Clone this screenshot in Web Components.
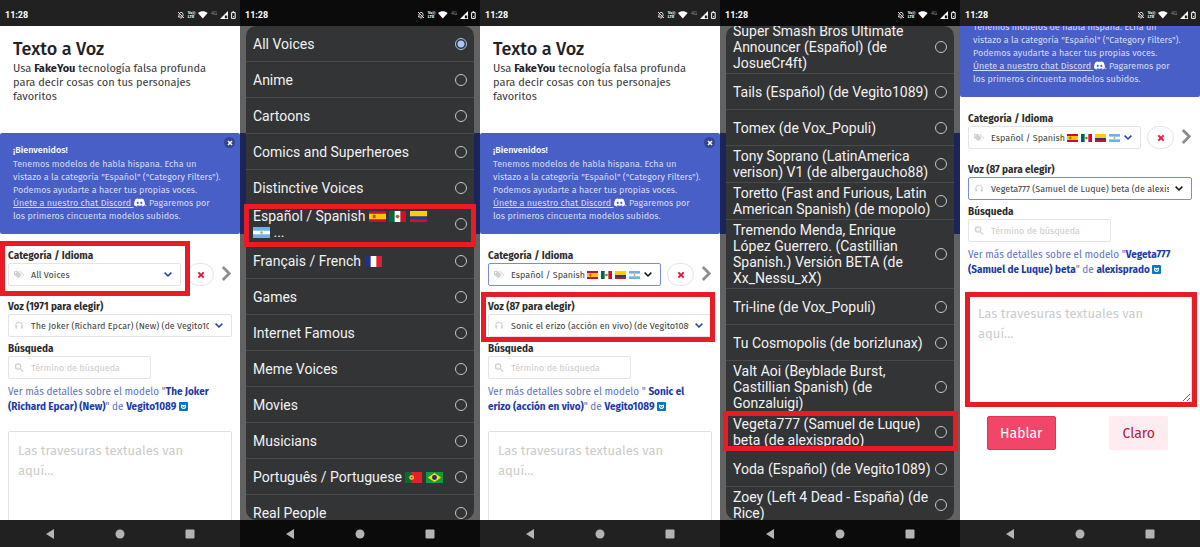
<!DOCTYPE html>
<html lang="es">
<head>
  <meta charset="UTF-8">
  <meta name="viewport" content="width=device-width, initial-scale=1">
  <title>Texto a Voz</title>
  <style>
    body {
      margin: 0;
      font-family: 'Fira Sans', 'Noto Sans', sans-serif;
      background: #fff;
    }
    main {
      display: grid;
      grid-template-columns: repeat(5, minmax(0, 1fr));
      height: 100vh;
      overflow: hidden;
    }
  </style>
</head>
<body>
  <main>
    <phone-frame>
      <page-intro></page-intro>
      <welcome-notice></welcome-notice>
      <voice-form count="1971" category="All Voices" voice="The Joker (Richard Epcar) (New) (de Vegito1089)">
        Ver más detalles sobre el modelo "<b>The Joker (Richard Epcar) (New)</b>" de <b>Vegito1089</b>
      </voice-form>
      <highlight-box slot="overlay" style="top: 241px; left: 0; right: 50px; height: 55px"></highlight-box>
    </phone-frame>

    <phone-frame dimmed>
      <option-sheet>
        <option-row checked>All Voices</option-row>
        <option-row>Anime</option-row>
        <option-row>Cartoons</option-row>
        <option-row>Comics and Superheroes</option-row>
        <option-row>Distinctive Voices</option-row>
        <option-row>Español / Spanish <flag-icon country="es"></flag-icon> <flag-icon country="mx"></flag-icon> <flag-icon country="co"></flag-icon> <span style="white-space: nowrap"><flag-icon country="ar"></flag-icon> ...</span></option-row>
        <option-row>Français / French <flag-icon country="fr"></flag-icon></option-row>
        <option-row>Games</option-row>
        <option-row>Internet Famous</option-row>
        <option-row>Meme Voices</option-row>
        <option-row>Movies</option-row>
        <option-row>Musicians</option-row>
        <option-row>Português / Portuguese <flag-icon country="pt"></flag-icon> <flag-icon country="br"></flag-icon></option-row>
        <option-row>Real People</option-row>
      </option-sheet>
      <highlight-box slot="overlay" style="top: 204px; left: 4px; right: 4px; height: 43px"></highlight-box>
    </phone-frame>

    <phone-frame>
      <page-intro></page-intro>
      <welcome-notice></welcome-notice>
      <voice-form count="87" category="Español / Spanish" flags="es mx co ar" focused="category" voice="Sonic el erizo (acción en vivo) (de Vegito1089)">
        Ver más detalles sobre el modelo " <b>Sonic el erizo (acción en vivo)</b>" de <b>Vegito1089</b>
      </voice-form>
      <highlight-box slot="overlay" style="top: 292px; left: 1px; right: 5px; height: 50px"></highlight-box>
    </phone-frame>

    <phone-frame dimmed>
      <option-sheet scroll="5">
        <option-row>Super Smash Bros Ultimate Announcer (Español) (de JosueCr4ft)</option-row>
        <option-row>Tails (Español) (de Vegito1089)</option-row>
        <option-row>Tomex (de Vox_Populi)</option-row>
        <option-row>Tony Soprano (LatinAmerica verison) V1 (de albergaucho88)</option-row>
        <option-row>Toretto (Fast and Furious, Latin American Spanish) (de mopolo)</option-row>
        <option-row>Tremendo Menda, Enrique López Guerrero. (Castillian Spanish.) Versión BETA (de Xx_Nessu_xX)</option-row>
        <option-row>Tri-line (de Vox_Populi)</option-row>
        <option-row>Tu Cosmopolis (de borizlunax)</option-row>
        <option-row>Valt Aoi (Beyblade Burst, Castillian Spanish) (de Gonzaluigi)</option-row>
        <option-row>Vegeta777 (Samuel de Luque) beta (de alexisprado)</option-row>
        <option-row>Yoda (Español) (de Vegito1089)</option-row>
        <option-row>Zoey (Left 4 Dead - España) (de Rice)</option-row>
      </option-sheet>
      <highlight-box slot="overlay" style="top: 411px; left: 3px; right: 2px; height: 40px"></highlight-box>
    </phone-frame>

    <phone-frame scroll="137">
      <page-intro></page-intro>
      <welcome-notice></welcome-notice>
      <voice-form count="87" category="Español / Spanish" flags="es mx co ar" focused="voice" voice="Vegeta777 (Samuel de Luque) beta (de alexisprado)">
        Ver más detalles sobre el modelo "<b>Vegeta777 (Samuel de Luque) beta</b>" de <b>alexisprado</b>
      </voice-form>
      <highlight-box slot="overlay" style="top: 292px; left: 5px; right: 3px; height: 115px"></highlight-box>
    </phone-frame>
  </main>

  <script>
    const ICONS = {
      tags: '<svg viewBox="0 0 640 512" fill="currentColor"><path fill-rule="evenodd" d="M0 252V80c0-26 22-48 48-48h172c13 0 25 5 34 14l212 212c19 19 19 49 0 68L326 466c-19 19-49 19-68 0L14 286c-9-9-14-21-14-34zm112-156a48 48 0 100 96 48 48 0 000-96z"/><path d="M625 258L413 46c-9-9-21-14-34-14h-46l226 226c30 30 30 74 2 104L420 500c19 8 44-16 50-24l155-150c19-19 19-49 0-68z"/></svg>',
      headset: '<svg viewBox="0 0 24 24" fill="currentColor"><path d="M12 2C6.500 2 2 6.500 2 12v4a3 3 0 003 4h2v-8H4.500C4.500 7.500 8 4.500 12 4.500s7.500 3 7.500 7.500H17v8h2a3 3 0 003-4v-4c0-5.500-4.500-10-10-10z"/></svg>',
      search: '<svg viewBox="0 0 24 24" fill="none" stroke="currentColor" stroke-width="3.500" stroke-linecap="round"><circle cx="9.500" cy="9.500" r="7"/><path d="M15 15l7 7"/></svg>',
      chevronDown: '<svg viewBox="0 0 12 12" fill="none" stroke="currentColor" stroke-width="2"><path d="M1.500 3.500L6 8l4.500-4.500"/></svg>',
      chevronRight: '<svg viewBox="0 0 12 18" fill="none" stroke="currentColor" stroke-width="3"><path d="M2 2l7 7-7 7"/></svg>',
      close: '<svg viewBox="0 0 12 12" fill="none" stroke="currentColor" stroke-width="3"><path d="M2 2l8 8M10 2l-8 8"/></svg>',
      discord: '<svg viewBox="0 2 24 20" fill="currentColor"><path d="M20.317 4.3698a19.7913 19.7913 0 00-4.8851-1.5152.0741.0741 0 00-.0785.0371c-.211.3753-.4447.8648-.6083 1.2495-1.8447-.2762-3.68-.2762-5.4868 0-.1636-.3933-.4058-.8742-.6177-1.2495a.077.077 0 00-.0785-.037 19.7363 19.7363 0 00-4.8852 1.515.0699.0699 0 00-.0321.0277C.5334 9.0458-.319 13.5799.0992 18.0578a.0824.0824 0 00.0312.0561c2.0528 1.5076 4.0413 2.4228 5.9929 3.0294a.0777.0777 0 00.0842-.0276c.4616-.6304.8731-1.2952 1.226-1.9942a.076.076 0 00-.0416-.1057c-.6528-.2476-1.2743-.5495-1.8722-.8923a.077.077 0 01-.0076-.1277c.1258-.0943.2517-.1923.3718-.2914a.0743.0743 0 01.0776-.0105c3.9278 1.7933 8.18 1.7933 12.0614 0a.0739.0739 0 01.0785.0095c.1202.099.246.1981.3728.2924a.077.077 0 01-.0066.1276 12.2986 12.2986 0 01-1.873.8914.0766.0766 0 00-.0407.1067c.3604.698.7719 1.3628 1.225 1.9932a.076.076 0 00.0842.0286c1.961-.6067 3.9495-1.5219 6.0023-3.0294a.077.077 0 00.0313-.0552c.5004-5.177-.8382-9.6739-3.5485-13.6604a.061.061 0 00-.0312-.0286zM8.02 15.3312c-1.1825 0-2.1569-1.0857-2.1569-2.419 0-1.3332.9555-2.4189 2.157-2.4189 1.2108 0 2.1757 1.0952 2.1568 2.419 0 1.3332-.9555 2.4189-2.1569 2.4189zm7.9748 0c-1.1825 0-2.1569-1.0857-2.1569-2.419 0-1.3332.9554-2.4189 2.1569-2.4189 1.2108 0 2.1757 1.0952 2.1568 2.419 0 1.3332-.946 2.4189-2.1568 2.4189z"/></svg>',
      badge: '<svg viewBox="0 0 18 18"><rect width="18" height="18" rx="2" fill="#0f74b8"/><path d="M4 5l3 1h4l3-1v6l-3 3H7l-3-3z" fill="#e6fbff"/><path d="M6 8l3 2 3-2v2l-3 2-3-2z" fill="#0f74b8"/></svg>',
      bellOff: '<svg viewBox="0 0 24 24" fill="none" stroke="currentColor" stroke-width="2.500"><path d="M3 3l18 18M8 6c5-4 10-1 10 4v5M6 9v6l-2 3h13M10 21h4"/></svg>',
      wifi: '<svg viewBox="0 0 24 20" fill="currentColor"><path d="M0 5C7-1 17-1 24 5L12 19z"/></svg>',
      signal: '<svg viewBox="0 0 20 20"><path fill="currentColor" fill-rule="evenodd" d="M20 0v20H0zM12 11v7h6v-7z"/></svg>',
      battery: '<svg viewBox="0 0 12 20" fill="none" stroke="currentColor" stroke-width="2.500"><path d="M1.500 4h9v14.500h-9z"/><path d="M4 2h4"/><path d="M5 14h2"/></svg>',
      back: '<svg viewBox="0 0 10 10" fill="currentColor"><path d="M9 0v10L1 5z"/></svg>',
      home: '<svg viewBox="0 0 10 10" fill="currentColor"><circle cx="5" cy="5" r="4.500"/></svg>',
      recent: '<svg viewBox="0 0 10 10" fill="currentColor"><rect x="0.500" y="0.500" width="9" height="9" rx="1"/></svg>'
    };

    const FLAGS = {
      es: '<path fill="#c8102e" d="M0 0h18v12H0z"/><path fill="#ffc400" d="M0 3h18v6H0z"/><path fill="#b3541e" d="M4 4h3v4H4z"/>',
      mx: '<path fill="#fff" d="M0 0h18v12H0z"/><path fill="#006847" d="M0 0h6v12H0z"/><path fill="#ce1126" d="M12 0h6v12h-6z"/><circle cx="9" cy="6" r="2" fill="#8c6b3f"/>',
      co: '<path fill="#ffcd00" d="M0 0h18v6H0z"/><path fill="#1e3a97" d="M0 6h18v3H0z"/><path fill="#d0102c" d="M0 9h18v3H0z"/>',
      ar: '<path fill="#6cb4e8" d="M0 0h18v12H0z"/><path fill="#fff" d="M0 4h18v4H0z"/><circle cx="9" cy="6" r="1.500" fill="#e0a030"/>',
      fr: '<path fill="#fff" d="M0 0h18v12H0z"/><path fill="#1e2f96" d="M0 0h6v12H0z"/><path fill="#e1202e" d="M12 0h6v12h-6z"/>',
      pt: '<path fill="#e1202e" d="M0 0h18v12H0z"/><path fill="#0a6b2d" d="M0 0h7v12H0z"/><circle cx="7" cy="6" r="2.500" fill="#ffd83d"/><circle cx="7" cy="6" r="1.200" fill="#e1202e"/>',
      br: '<path fill="#0f9b3f" d="M0 0h18v12H0z"/><path fill="#ffdf00" d="M9 1l7 5-7 5-7-5z"/><circle cx="9" cy="6" r="2.600" fill="#1d2f85"/>'
    };

    class FlagIcon extends HTMLElement {
      constructor() {
        super();
        this.attachShadow({ mode: 'open' });
      }

      connectedCallback() {
        this.shadowRoot.innerHTML = `
          <style>
            :host {
              display: inline-block;
              width: var(--flag-width, 17px);
              height: var(--flag-height, 11px);
              vertical-align: -1px;
            }
            svg { display: block; width: 100%; height: 100%; }
          </style>
          <svg viewBox="0 0 18 12" preserveAspectRatio="none" aria-hidden="true">${FLAGS[this.getAttribute('country')]}</svg>
        `;
      }
    }
    customElements.define('flag-icon', FlagIcon);

    class HighlightBox extends HTMLElement {
      constructor() {
        super();
        this.attachShadow({ mode: 'open' });
        this.shadowRoot.innerHTML = `
          <style>
            :host {
              display: block;
              position: absolute;
              box-sizing: border-box;
              border: 5px solid #e81c24;
              pointer-events: none;
            }
          </style>
        `;
      }
    }
    customElements.define('highlight-box', HighlightBox);

    class StatusBar extends HTMLElement {
      constructor() {
        super();
        this.attachShadow({ mode: 'open' });
      }

      connectedCallback() {
        this.shadowRoot.innerHTML = `
          <style>
            :host {
              display: flex;
              align-items: center;
              justify-content: space-between;
              height: 26px;
              padding: 4px 4px 0 5px;
              box-sizing: border-box;
              background: var(--bar-color);
              color: #fff;
              font-family: Roboto, sans-serif;
            }
            time { font-size: 9px; font-weight: 700; }
            .icons { display: flex; align-items: center; gap: 3px; }
            svg { display: block; height: 8px; }
            .volte, .net { font-size: 4px; line-height: 4px; font-weight: 700; }
            .net { color: #888; font-size: 5px; font-weight: 400; margin-bottom: 4px; }
          </style>
          <time>11:28</time>
          <div class="icons">
            ${ICONS.bellOff}
            <span class="volte">Vo))<br>LTE</span>
            ${ICONS.wifi}
            <span class="net">4G</span>
            ${ICONS.signal}
            ${ICONS.battery}
          </div>
        `;
      }
    }
    customElements.define('status-bar', StatusBar);

    class NavBar extends HTMLElement {
      constructor() {
        super();
        this.attachShadow({ mode: 'open' });
      }

      connectedCallback() {
        this.shadowRoot.innerHTML = `
          <style>
            :host {
              display: grid;
              grid-template-columns: repeat(3, 1fr);
              height: 27px;
              padding: 0 15px;
              box-sizing: border-box;
              background: var(--bar-color);
            }
            button {
              display: flex;
              align-items: center;
              justify-content: center;
              padding: 0;
              border: none;
              background: none;
              color: #b4b4b4;
            }
            svg { width: 10px; height: 10px; }
          </style>
          <button aria-label="Atrás">${ICONS.back}</button>
          <button aria-label="Inicio">${ICONS.home}</button>
          <button aria-label="Recientes">${ICONS.recent}</button>
        `;
      }
    }
    customElements.define('nav-bar', NavBar);

    class PageIntro extends HTMLElement {
      constructor() {
        super();
        this.attachShadow({ mode: 'open' });
      }

      connectedCallback() {
        this.shadowRoot.innerHTML = `
          <style>
            :host {
              display: block;
              padding: 13px 12px 29px 13px;
              color: #363636;
            }
            h1 {
              margin: 0 0 3px;
              font-size: 18px;
              line-height: 20px;
              font-weight: 500;
              color: #222;
            }
            p {
              margin: 0;
              font-size: 11px;
              line-height: 14px;
            }
            b { color: #222; }
          </style>
          <h1>Texto a Voz</h1>
          <p>Usa <b>FakeYou</b> tecnología falsa profunda para decir cosas con tus personajes favoritos</p>
        `;
      }
    }
    customElements.define('page-intro', PageIntro);

    class WelcomeNotice extends HTMLElement {
      constructor() {
        super();
        this.attachShadow({ mode: 'open' });
      }

      connectedCallback() {
        this.shadowRoot.innerHTML = `
          <style>
            :host {
              display: block;
              position: relative;
              padding: 11px 13px;
              border-radius: 2px;
              background: #485fc7;
              color: #d5dcf6;
              font-size: 9px;
              line-height: 13px;
            }
            strong { display: block; margin-bottom: 1px; font-weight: 500; color: #fff; }
            p { margin: 0; }
            a { color: inherit; }
            .discord svg {
              width: 11px;
              height: 9px;
              vertical-align: -1px;
              color: #fff;
            }
            button {
              position: absolute;
              top: 4px;
              right: 5px;
              display: flex;
              align-items: center;
              justify-content: center;
              width: 11px;
              height: 11px;
              padding: 0;
              border: none;
              border-radius: 50%;
              background: #33448f;
              color: #fff;
            }
            button svg { width: 6px; height: 6px; }
          </style>
          <button aria-label="Cerrar">${ICONS.close}</button>
          <strong>¡Bienvenidos!</strong>
          <p>
            Tenemos modelos de habla hispana. Echa un vistazo a la categoría "Español" ("Category Filters").<br>
            Podemos ayudarte a hacer tus propias voces.<br>
            <a class="discord" href="#discord">Únete a nuestro chat Discord ${ICONS.discord}</a>. Pagaremos por<br>
            los primeros cincuenta modelos subidos.
          </p>
        `;
      }
    }
    customElements.define('welcome-notice', WelcomeNotice);

    class VoiceForm extends HTMLElement {
      constructor() {
        super();
        this.attachShadow({ mode: 'open' });
      }

      connectedCallback() {
        const focused = this.getAttribute('focused');
        const flags = (this.getAttribute('flags') || '').split(' ').filter(Boolean)
          .map((c) => `<flag-icon country="${c}"></flag-icon>`).join('');

        this.shadowRoot.innerHTML = `
          <style>
            :host {
              display: block;
              padding: 15px 8px 70px;
              color: #363636;
            }
            label {
              display: block;
              font-size: 10px;
              line-height: 14px;
              font-weight: 700;
              color: #2b2b2b;
            }
            .row { display: flex; align-items: flex-end; }
            .category { flex: 1; }
            .voice { margin-top: 14px; }
            .search { margin-top: 5px; width: 64%; }
            .control { position: relative; }
            .control > svg {
              position: absolute;
              top: 7px;
              left: 6px;
              width: 10px;
              height: 9px;
              color: #d0d0d0;
            }
            .control > svg.arrow {
              left: auto;
              right: 8px;
              color: #2440b0;
            }
            .focused > svg.arrow { color: #111; }
            select, input {
              display: block;
              width: 100%;
              height: 23px;
              box-sizing: border-box;
              padding: 0 22px;
              border: 1px solid #e4e4e4;
              border-radius: 2px;
              background: #fff;
              color: #404040;
              font-family: inherit;
              font-size: 9px;
              appearance: none;
            }
            .focused select { border-color: #7a8bdc; }
            ::placeholder { color: #ccc; opacity: 1; }
            .flags {
              position: absolute;
              top: 8px;
              left: 99px;
              display: flex;
              gap: 3px;
              --flag-width: 11px;
              --flag-height: 8px;
              pointer-events: none;
            }
            .clear {
              display: flex;
              align-items: center;
              justify-content: center;
              width: 27px;
              height: 23px;
              margin-left: 6px;
              padding: 0;
              border: 1px solid #e4e4e4;
              border-radius: 12px;
              background: #fff;
              color: #e8173f;
            }
            .clear svg { width: 8px; height: 8px; }
            .next {
              margin: 0 0 4px 7px;
              padding: 0;
              border: none;
              background: none;
              color: #8c8c8c;
            }
            .next svg { display: block; width: 11px; height: 17px; }
            .details {
              display: block;
              margin: 6px 0 16px;
              padding-right: 8px;
              font-size: 10px;
              line-height: 15px;
              color: #5b70c6;
              text-decoration: none;
            }
            ::slotted(b) { color: #2038a8; }
            .details svg { width: 9px; height: 9px; vertical-align: -1px; }
            textarea {
              display: block;
              width: 100%;
              height: 109px;
              box-sizing: border-box;
              padding: 9px;
              border: 1px solid #dfdfdf;
              border-radius: 2px;
              font-family: inherit;
              font-size: 13px;
              line-height: 20px;
            }
            .actions {
              display: flex;
              justify-content: space-between;
              margin: 13px 24px 0 19px;
            }
            .actions button {
              height: 34px;
              padding: 0 12px;
              border: 1px solid #feecf0;
              border-radius: 2px;
              background: #feecf0;
              color: #b8163e;
              font-family: inherit;
              font-size: 14px;
            }
            .actions .speak { background: #f14668; color: #fff; border-color: #dd3659; }
          </style>
          <div class="row">
            <div class="category">
              <label for="category">Categoría / Idioma</label>
              <div class="control ${focused === 'category' ? 'focused' : ''}">
                <select id="category"><option>${this.getAttribute('category')}</option></select>
                ${ICONS.tags}
                <span class="flags">${flags}</span>
                ${ICONS.chevronDown.replace('<svg', '<svg class="arrow"')}
              </div>
            </div>
            <button class="clear" aria-label="Quitar filtro">${ICONS.close}</button>
            <button class="next" aria-label="Siguiente">${ICONS.chevronRight}</button>
          </div>
          <div class="voice">
            <label for="voice">Voz (${this.getAttribute('count')} para elegir)</label>
            <div class="control ${focused === 'voice' ? 'focused' : ''}">
              <select id="voice"><option>${this.getAttribute('voice')}</option></select>
              ${ICONS.headset}
              ${ICONS.chevronDown.replace('<svg', '<svg class="arrow"')}
            </div>
          </div>
          <div class="search">
            <label for="search">Búsqueda</label>
            <div class="control">
              <input id="search" type="text" placeholder="Término de búsqueda">
              ${ICONS.search}
            </div>
          </div>
          <a class="details" href="#modelo"><slot></slot>${ICONS.badge}</a>
          <textarea aria-label="Texto" placeholder="Las travesuras textuales van aquí..."></textarea>
          <div class="actions">
            <button class="speak">Hablar</button>
            <button>Claro</button>
          </div>
        `;
      }
    }
    customElements.define('voice-form', VoiceForm);

    class OptionRow extends HTMLElement {
      constructor() {
        super();
        this.attachShadow({ mode: 'open' });
      }

      connectedCallback() {
        this.shadowRoot.innerHTML = `
          <style>
            :host { display: block; flex: none; }
            label {
              display: flex;
              align-items: center;
              justify-content: space-between;
              gap: 4px;
              min-height: 36px;
              box-sizing: border-box;
              padding: 2px 7px;
              border-bottom: 1px solid #48494b;
            }
            input {
              flex: none;
              width: 12px;
              height: 12px;
              margin: 0;
              border: 1px solid #c4c4c4;
              border-radius: 50%;
              appearance: none;
            }
            input:checked {
              border-color: #a8c0e8;
              background: radial-gradient(circle, #a8c7fa 3px, transparent 4px);
            }
          </style>
          <label>
            <span><slot></slot></span>
            <input type="radio" ${this.hasAttribute('checked') ? 'checked' : ''}>
          </label>
        `;
      }
    }
    customElements.define('option-row', OptionRow);

    class OptionSheet extends HTMLElement {
      constructor() {
        super();
        this.attachShadow({ mode: 'open' });
      }

      connectedCallback() {
        this.shadowRoot.innerHTML = `
          <style>
            :host {
              display: flex;
              flex-direction: column;
              height: 100%;
              margin: 0 6px;
              border-radius: 10px;
              overflow: hidden;
              background: #333436;
              color: #f2f2f2;
              font-family: Roboto, sans-serif;
              font-size: 14px;
              line-height: 16px;
            }
          </style>
          <slot></slot>
        `;
      }
    }
    customElements.define('option-sheet', OptionSheet);

    class PhoneFrame extends HTMLElement {
      constructor() {
        super();
        this.attachShadow({ mode: 'open' });
      }

      connectedCallback() {
        this.shadowRoot.innerHTML = `
          <style>
            :host {
              --bar-color: #212121;
              display: flex;
              flex-direction: column;
              position: relative;
              height: 100vh;
            }
            :host([dimmed]) { --bar-color: #0b0b0b; }
            .screen {
              flex: 1;
              min-height: 0;
              overflow: hidden;
              background: #fff;
            }
            :host([dimmed]) .screen {
              background: linear-gradient(#626262 107px, #1b2558 107px 208px, #626262 208px);
            }
          </style>
          <status-bar></status-bar>
          <div class="screen"><slot></slot></div>
          <nav-bar></nav-bar>
          <slot name="overlay"></slot>
        `;
        this.shadowRoot.querySelector('.screen').scrollTop = Number(this.getAttribute('scroll'));
      }
    }
    customElements.define('phone-frame', PhoneFrame);

    // the sheets only get their height once the frames are in place
    document.querySelectorAll('option-sheet').forEach((sheet) => {
      sheet.scrollTop = Number(sheet.getAttribute('scroll'));
    });
  </script>
</body>
</html>
